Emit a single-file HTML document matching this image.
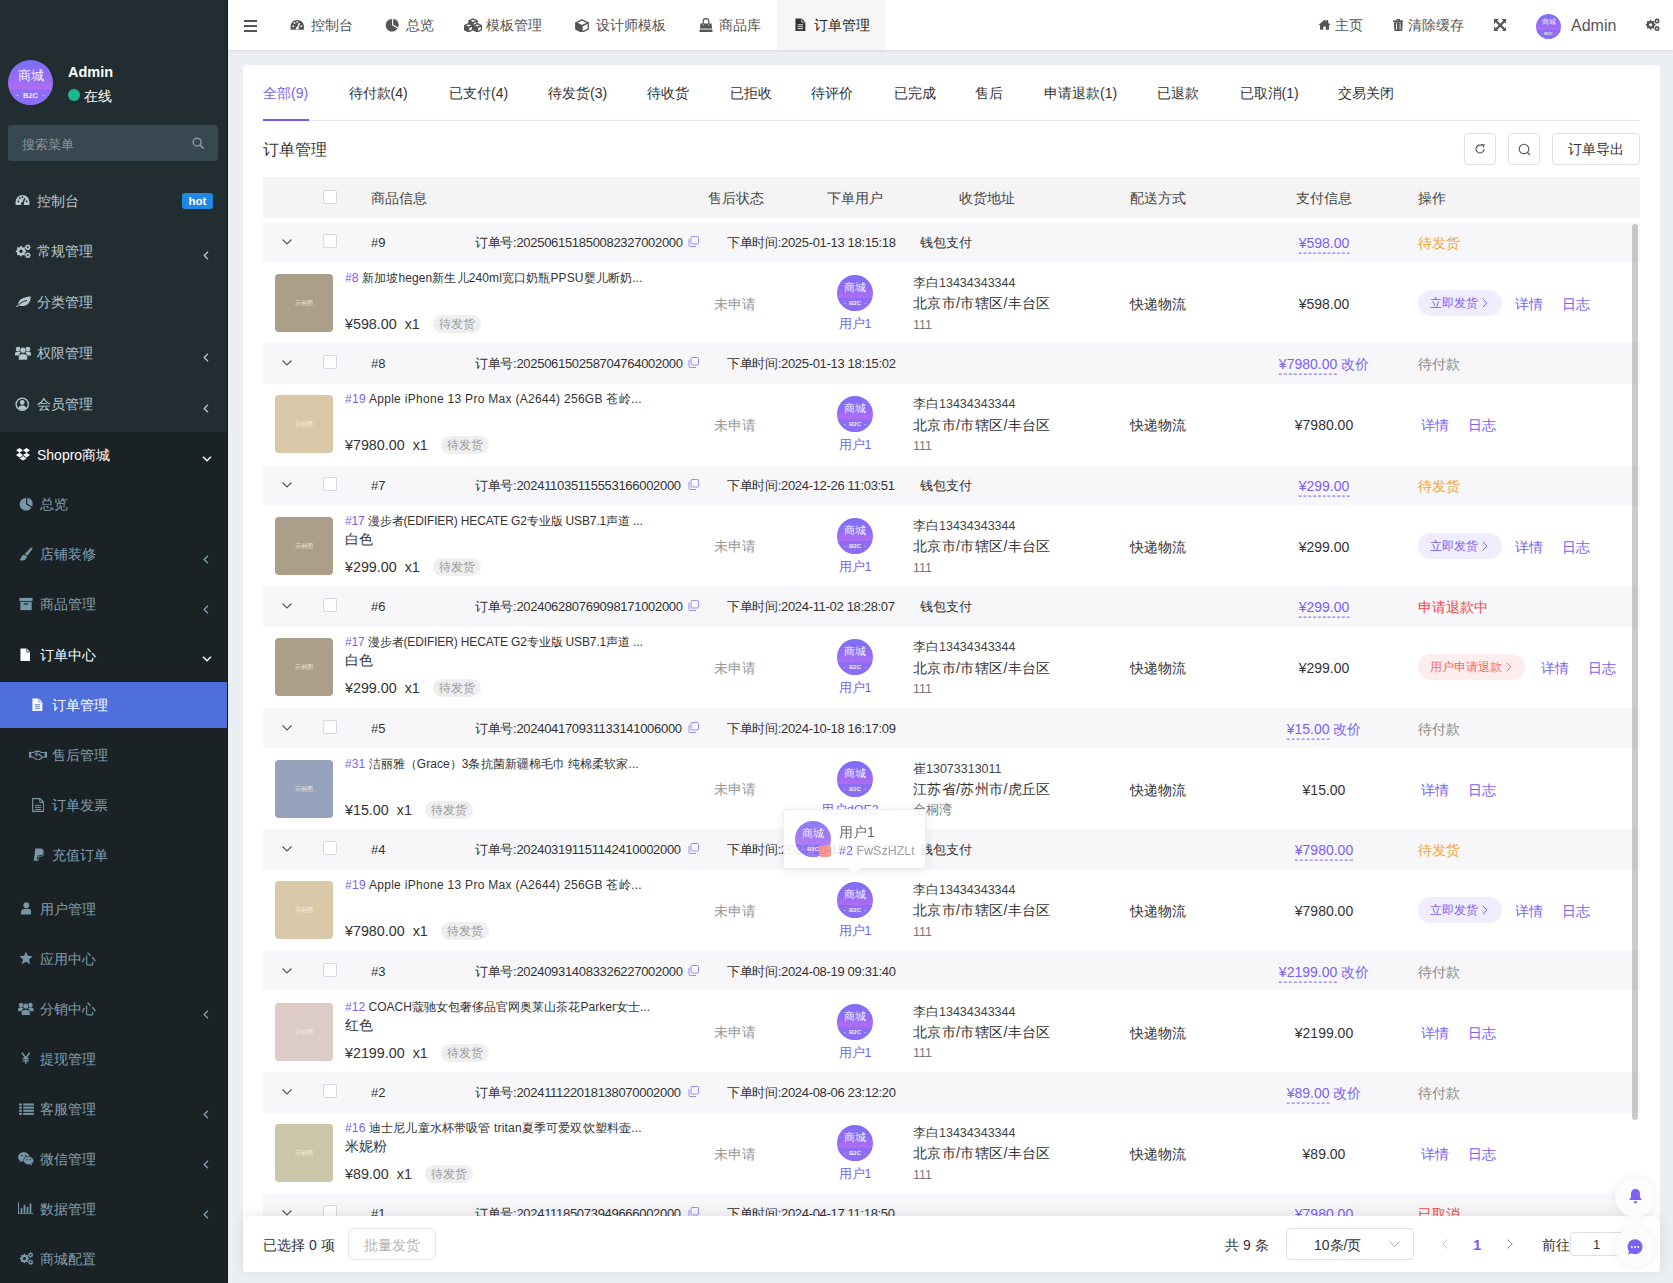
<!DOCTYPE html>
<html><head><meta charset="utf-8"><style>
*{margin:0;padding:0;box-sizing:border-box}
html,body{width:1673px;height:1283px;overflow:hidden}
body{font-family:"Liberation Sans",sans-serif;background:#ebeef3;position:relative;color:#333}
.t{position:absolute;white-space:nowrap;transform:translateY(calc(-50% + 1px));line-height:1.2}
/* sidebar */
.side{position:absolute;left:0;top:0;width:228px;height:1283px;background:#1a2226;overflow:hidden}
.side .topbg{position:absolute;left:0;top:0;width:228px;height:432px;background:#222d32}
.side .edge{position:absolute;right:0;top:0;width:1px;height:1283px;background:#151b1e}
.mi{position:absolute;left:37px;font-size:14px;color:#b8c7ce;transform:translateY(calc(-50% + 1px));white-space:nowrap}
.mi2{position:absolute;left:40px;font-size:14px;color:#829fad;transform:translateY(calc(-50% + 1px));white-space:nowrap}
.mi3{position:absolute;left:52px;font-size:14px;color:#829fad;transform:translateY(calc(-50% + 1px));white-space:nowrap}
.ico{position:absolute}
.lt{position:absolute;left:202px;width:7px;height:9px}
/* header */
.hdr{position:absolute;left:228px;top:0;width:1445px;height:50px;background:#fff;box-shadow:0 1px 3px rgba(0,0,0,0.09)}
.nv{position:absolute;font-size:14px;color:#555;transform:translateY(calc(-50% + 1px));white-space:nowrap}
/* card */
.card{position:absolute;left:243px;top:65px;width:1417px;height:1207px;background:#fff;border-radius:4px}
.tab{position:absolute;top:93px;font-size:14px;color:#333;transform:translateY(calc(-50% + 1px));white-space:nowrap}
.btn{position:absolute;top:133px;height:32px;border:1px solid #dcdfe6;border-radius:4px;background:#fff}
.thead{position:absolute;left:263px;top:177px;width:1377px;height:41px;background:#f4f4f5}
.th{position:absolute;top:198px;font-size:14px;color:#444;transform:translateY(calc(-50% + 1px));white-space:nowrap}
.tablewrap{position:absolute;left:0;top:0;width:1673px;height:1216px;overflow:hidden}
.band{position:absolute;left:263px;width:1377px;height:40.5px;background:#f7f7f9}
.cb{position:absolute;width:14px;height:14px;border:1px solid #d6d9e3;border-radius:2px;background:#fff}
.bt{font-size:13px;color:#333}
.ono{letter-spacing:-0.3px}
.otm{letter-spacing:-0.32px}
.bprice{font-size:14px;color:#7b5ff2;transform:translate(-50%,calc(-50% + 1px))}
.dash{border-bottom:1px dashed #7b5ff2;padding-bottom:2px}
.bst{font-size:14px}
.thumb{position:absolute;width:58px;height:58px;border-radius:4px}
.thumb span{position:absolute;left:0;right:0;top:25px;text-align:center;font-size:6px;color:rgba(255,255,255,0.75)}
.ptitle{font-size:12px;color:#333}
.psku{font-size:14px;color:#333}
.pprice{font-size:14.3px;color:#333}
.tag{display:inline-block;height:18px;width:48px;border-radius:9px;background:#efefef;color:#999;font-size:12px;line-height:18px;text-align:center}
.gray14{font-size:14px;color:#999}
.av{position:absolute;border-radius:50%;background:linear-gradient(180deg,#7d6ef8 0%,#9a6cf4 45%,#b26cf1 64%,#8a6cf4 100%);overflow:hidden}
.avt{position:absolute;left:0;right:0;text-align:center;color:rgba(255,255,255,0.92);line-height:1.2}
.avb{position:absolute;left:0;right:0;background:#8b6ef5}
.avs{position:absolute;left:0;right:0;text-align:center;color:rgba(255,255,255,0.9);line-height:1.2;font-weight:bold}
.uname{font-size:12.5px;color:#7b5ff2}
.addr1{font-size:12.5px;color:#444}
.addr2{font-size:14px;color:#333;letter-spacing:0.37px}
.addr3{font-size:12.5px;color:#777}
.c14{font-size:14px;color:#333}
.link{font-size:14px;color:#7b5ff2}
.pill{position:absolute;height:26px;border-radius:13px;background:#f0edfe;color:#7b5ff2;font-size:12px;line-height:26px;padding-left:12px;white-space:nowrap}
.pill.red{background:#fdeded;color:#f26b6b}
.arr{font-size:13px}
/* footer */
.foot{position:absolute;left:243px;top:1216px;width:1417px;height:56px;background:#fff;border-radius:8px 8px 4px 4px;box-shadow:0 -2px 14px rgba(0,0,0,0.09)}

</style></head><body>
<div class="side"><div class="topbg"></div>
<div class="av" style="left:8px;top:60px;width:45px;height:45px;"><div class="avt" style="font-size:13.12px;top:7.50px">商城</div><div class="avb" style="top:29.12px;height:17.50px"></div><div class="avs" style="font-size:7.50px;top:31.00px">·&nbsp;&nbsp;B2C&nbsp;&nbsp;·</div></div>
<div class="t" style="left:68px;top:72px;font-size:14.5px;font-weight:bold;color:#fff">Admin</div>
<div style="position:absolute;left:68px;top:89px;width:12px;height:12px;border-radius:50%;background:#1fb58f"></div>
<div class="t" style="left:84px;top:95px;font-size:14px;color:#fff">在线</div>
<div style="position:absolute;left:8px;top:125px;width:210px;height:36px;border-radius:3px;background:#374850"></div>
<div class="t" style="left:22px;top:143.5px;font-size:13px;color:#8b9499">搜索菜单</div>
<svg class="ico" style="left:192px;top:137px;" width="12" height="12" viewBox="0 0 14 14"><circle cx="6" cy="6" r="4.6" fill="none" stroke="#8b9499" stroke-width="1.8"/><path d="M9.4 9.4L13 13" stroke="#8b9499" stroke-width="2" stroke-linecap="round"/></svg>
<svg class="ico" style="left:15px;top:194px;" width="15" height="12.0" viewBox="0 0 16 13"><path d="M8 1A7.5 7.5 0 0 0 0.5 8.5V12H15.5V8.5A7.5 7.5 0 0 0 8 1Z" fill="#b8c7ce"/><circle cx="3.5" cy="8" r="1" fill="#222d32"/><circle cx="5" cy="4.5" r="1" fill="#222d32"/><circle cx="8" cy="3.2" r="1" fill="#222d32"/><circle cx="12.5" cy="8" r="1" fill="#222d32"/><path d="M8 11L10.5 4.5" stroke="#222d32" stroke-width="1.6"/><circle cx="8" cy="10.5" r="1.6" fill="#222d32"/></svg>
<div class="mi" style="top:200.5px">控制台</div>
<div style="position:absolute;left:182px;top:193px;width:31px;height:16px;border-radius:3px;background:#1e88e5;color:#fff;font-size:11.5px;font-weight:bold;text-align:center;line-height:16px">hot</div>
<svg class="ico" style="left:15px;top:243.5px;" width="16" height="14.5" viewBox="0 0 16 14.5"><polygon points="11.60,7.20 9.73,8.74 9.96,11.16 7.54,10.93 6.00,12.80 4.46,10.93 2.04,11.16 2.27,8.74 0.40,7.20 2.27,5.66 2.04,3.24 4.46,3.47 6.00,1.60 7.54,3.47 9.96,3.24 9.73,5.66" fill="#b8c7ce"/><circle cx="6" cy="7.2" r="3.472" fill="#b8c7ce"/><circle cx="6" cy="7.2" r="1.68" fill="#222d32"/><polygon points="16.00,3.30 14.93,4.18 15.06,5.56 13.68,5.43 12.80,6.50 11.92,5.43 10.54,5.56 10.67,4.18 9.60,3.30 10.67,2.42 10.54,1.04 11.92,1.17 12.80,0.10 13.68,1.17 15.06,1.04 14.93,2.42" fill="#b8c7ce"/><circle cx="12.8" cy="3.3" r="1.984" fill="#b8c7ce"/><circle cx="12.8" cy="3.3" r="0.96" fill="#222d32"/><polygon points="16.00,11.30 14.93,12.18 15.06,13.56 13.68,13.43 12.80,14.50 11.92,13.43 10.54,13.56 10.67,12.18 9.60,11.30 10.67,10.42 10.54,9.04 11.92,9.17 12.80,8.10 13.68,9.17 15.06,9.04 14.93,10.42" fill="#b8c7ce"/><circle cx="12.8" cy="11.3" r="1.984" fill="#b8c7ce"/><circle cx="12.8" cy="11.3" r="0.96" fill="#222d32"/></svg>
<div class="mi" style="top:250.6px">常规管理</div>
<svg class="ico" style="left:203px;top:251px;" width="6" height="9" viewBox="0 0 6 9"><path d="M5 0.8L1.2 4.5L5 8.2" fill="none" stroke="#b8c7ce" stroke-width="1.3"/></svg>
<svg class="ico" style="left:16px;top:295.8px;" width="15" height="11.5" viewBox="0 0 15 11.5"><path d="M2.2 9.2C1.8 4.5 5.5 1 14.8 0.5C14.5 7.5 10.5 10.5 5 10C3.8 9.9 2.8 9.6 2.2 9.2Z" fill="#b8c7ce"/><path d="M0.6 11.2C3 7.5 6.5 5.5 11 4.3" fill="none" stroke="#222d32" stroke-width="1"/><path d="M0.4 11.3C1 10.2 1.6 9.6 2.4 9.1" fill="none" stroke="#b8c7ce" stroke-width="1.1"/></svg>
<div class="mi" style="top:302px">分类管理</div>
<svg class="ico" style="left:15px;top:345.5px;" width="16" height="14.0" viewBox="0 0 16 14"><circle cx="3.2" cy="3.2" r="2.4" fill="#b8c7ce"/><circle cx="12.8" cy="3.2" r="2.4" fill="#b8c7ce"/><path d="M0 9.5V7.5C0 6.3 1 5.8 3.2 5.8S5.5 6.2 5.5 6.5L3.6 9.5Z" fill="#b8c7ce"/><path d="M16 9.5V7.5C16 6.3 15 5.8 12.8 5.8S10.5 6.2 10.5 6.5L12.4 9.5Z" fill="#b8c7ce"/><circle cx="8" cy="4.2" r="3" fill="#b8c7ce" stroke="#222d32" stroke-width="0.6"/><path d="M3.5 14V11C3.5 8.8 5 7.8 8 7.8S12.5 8.8 12.5 11V14Z" fill="#b8c7ce" stroke="#222d32" stroke-width="0.6"/></svg>
<div class="mi" style="top:352.5px">权限管理</div>
<svg class="ico" style="left:203px;top:353px;" width="6" height="9" viewBox="0 0 6 9"><path d="M5 0.8L1.2 4.5L5 8.2" fill="none" stroke="#b8c7ce" stroke-width="1.3"/></svg>
<svg class="ico" style="left:15px;top:397px;" width="14.5" height="14.5" viewBox="0 0 16 16"><circle cx="8" cy="8" r="7.5" fill="#b8c7ce"/><circle cx="8" cy="8" r="6" fill="#222d32"/><circle cx="8" cy="6" r="2.6" fill="#b8c7ce"/><path d="M3.5 12.5C4.5 10 6 9.5 8 9.5S11.5 10 12.5 12.5C11 14 9.5 14.2 8 14.2S5 14 3.5 12.5Z" fill="#b8c7ce"/></svg>
<div class="mi" style="top:404px">会员管理</div>
<svg class="ico" style="left:203px;top:404px;" width="6" height="9" viewBox="0 0 6 9"><path d="M5 0.8L1.2 4.5L5 8.2" fill="none" stroke="#b8c7ce" stroke-width="1.3"/></svg>
<svg class="ico" style="left:16px;top:447px;" width="14" height="14" viewBox="0 0 16 16"><path d="M4 1L0 3.8L4 6.5L8 3.8ZM12 1L8 3.8L12 6.5L16 3.8ZM0 9.2L4 12L8 9.2L4 6.5ZM16 9.2L12 12L8 9.2L12 6.5ZM4 13L8 15.5L12 13L8 10.3Z" fill="#fff"/></svg>
<div class="mi" style="top:454.5px;color:#fff">Shopro商城</div>
<svg class="ico" style="left:202px;top:456px;" width="10" height="6" viewBox="0 0 10 6"><path d="M1 0.8L5 4.8L9 0.8" fill="none" stroke="#fff" stroke-width="1.35"/></svg>
<svg class="ico" style="left:19px;top:497px;" width="14" height="14" viewBox="0 0 16 16"><path d="M8 8.3L8.00 1.10A7.2 7.2 0 1 0 14.24 11.90Z" fill="#7796a6"/><path d="M8.9 7.800000000000001L8.90 0.60A7.2 7.2 0 0 1 15.14 11.40Z" fill="#7796a6" stroke="#1a2226" stroke-width="0.9"/></svg>
<div class="mi2" style="top:504px">总览</div>
<svg class="ico" style="left:19px;top:547px;" width="14" height="14" viewBox="0 0 16 16"><path d="M15.2 0.8C15.8 1.3 15.5 2.2 14.8 3.2L9.5 10L6.5 8L13 1.5C13.9 0.7 14.7 0.4 15.2 0.8Z" fill="#7796a6"/><path d="M6 8.8L9 10.8C8.8 13.5 6.5 15.5 3.5 15.5C2 15.5 0.8 14.8 0.5 14C2.2 13.8 2.5 12.8 2.8 11.5C3.2 9.8 4.5 8.8 6 8.8Z" fill="#7796a6"/></svg>
<div class="mi2" style="top:554px">店铺装修</div>
<svg class="ico" style="left:203px;top:555px;" width="6" height="9" viewBox="0 0 6 9"><path d="M5 0.8L1.2 4.5L5 8.2" fill="none" stroke="#829fad" stroke-width="1.3"/></svg>
<svg class="ico" style="left:19px;top:597px;" width="14" height="14" viewBox="0 0 16 16"><rect x="0.5" y="1" width="15" height="3.5" fill="#7796a6"/><rect x="1.5" y="5.5" width="13" height="9.5" fill="#7796a6"/><rect x="5.5" y="7" width="5" height="1.6" rx="0.5" fill="#1a2226"/></svg>
<div class="mi2" style="top:604px">商品管理</div>
<svg class="ico" style="left:203px;top:605px;" width="6" height="9" viewBox="0 0 6 9"><path d="M5 0.8L1.2 4.5L5 8.2" fill="none" stroke="#829fad" stroke-width="1.3"/></svg>
<svg class="ico" style="left:19.5px;top:648px;" width="10.8" height="13.5" viewBox="0 0 12 15"><path d="M0.5 0.5H7.5L11.5 4.5V14.5H0.5Z" fill="#fff"/><path d="M7.5 0.5V4.5H11.5" fill="none" stroke="#1a2226" stroke-width="0.8"/></svg>
<div class="mi2" style="top:655px;color:#fff">订单中心</div>
<svg class="ico" style="left:202px;top:656px;" width="10" height="6" viewBox="0 0 10 6"><path d="M1 0.8L5 4.8L9 0.8" fill="none" stroke="#fff" stroke-width="1.35"/></svg>
<div style="position:absolute;left:0;top:682px;width:228px;height:46px;background:#4f6fdc"></div>
<svg class="ico" style="left:32px;top:698px;" width="10.8" height="13.5" viewBox="0 0 12 15"><path d="M0.5 0.5H7.5L11.5 4.5V14.5H0.5Z" fill="#fff"/><path d="M7.5 0.5V4.5H11.5" fill="none" stroke="#4f6fdc" stroke-width="0.8"/><rect x="3" y="7" width="6" height="1" fill="#4f6fdc"/><rect x="3" y="9.2" width="6" height="1" fill="#4f6fdc"/><rect x="3" y="11.4" width="6" height="1" fill="#4f6fdc"/></svg>
<div class="mi3" style="top:705px;color:#fff">订单管理</div>
<svg class="ico" style="left:29px;top:749.5px;" width="18" height="10.799999999999999" viewBox="0 0 20 12"><rect x="0" y="2" width="2.6" height="6.5" fill="#7796a6"/><rect x="17.4" y="2" width="2.6" height="6.5" fill="#7796a6"/><path d="M2.6 2.8H5L7.5 1.5H11.5L13.5 2.8H17.4M2.6 7.8H4.5L9 11C9.8 11.5 10.8 11.3 11.5 10.6L15.5 7.8H17.4" fill="none" stroke="#7796a6" stroke-width="1.3"/><path d="M9.5 2L7 4.8C7.8 6 9.5 6 11 4.5L14.5 7.5" fill="none" stroke="#7796a6" stroke-width="1.3"/></svg>
<div class="mi3" style="top:754.7px">售后管理</div>
<svg class="ico" style="left:32px;top:798px;" width="12.32" height="14" viewBox="0 0 12.3 14"><path d="M0.7 0.7H8L11.6 4.3V13.3H0.7Z" fill="none" stroke="#7796a6" stroke-width="1.2"/><path d="M7.8 0.9V4.5H11.4" fill="none" stroke="#7796a6" stroke-width="1"/><rect x="3" y="6.8" width="6.3" height="1" fill="#7796a6"/><rect x="3" y="8.9" width="6.3" height="1" fill="#7796a6"/><rect x="3" y="11" width="6.3" height="1" fill="#7796a6"/></svg>
<div class="mi3" style="top:805px">订单发票</div>
<svg class="ico" style="left:32px;top:848px;" width="13.5" height="13.5" viewBox="0 0 14 16"><path d="M3 0.5H9C12 0.5 13.2 2.2 12.7 4.8C12.2 7.5 10.2 9 7.5 9H5.5L4.5 15H1Z" fill="#7796a6"/><path d="M13.5 5C14 7.5 12.5 10.5 9 10.5H7.2L6.4 15.5H3.7L4 14H5.5L6.3 9.5H8C10.5 9.5 12.5 8 13.2 5.2Z" fill="#7796a6" opacity="0.8"/></svg>
<div class="mi3" style="top:854.5px">充值订单</div>
<svg class="ico" style="left:20.5px;top:902px;" width="10.625" height="12.5" viewBox="0 0 11 13"><circle cx="5.5" cy="3.3" r="3" fill="#7796a6"/><path d="M0 13V10.5C0 8 2 7 5.5 7S11 8 11 10.5V13Z" fill="#7796a6"/></svg>
<div class="mi2" style="top:909px">用户管理</div>
<svg class="ico" style="left:19px;top:951px;" width="14" height="14" viewBox="0 0 16 16"><path d="M8 0.5L10.2 5.5L15.5 6L11.5 9.6L12.7 15L8 12.2L3.3 15L4.5 9.6L0.5 6L5.8 5.5Z" fill="#7796a6"/></svg>
<div class="mi2" style="top:959px">应用中心</div>
<svg class="ico" style="left:18px;top:1001.5px;" width="15.5" height="13.5625" viewBox="0 0 16 14"><circle cx="3.2" cy="3.2" r="2.4" fill="#7796a6"/><circle cx="12.8" cy="3.2" r="2.4" fill="#7796a6"/><path d="M0 9.5V7.5C0 6.3 1 5.8 3.2 5.8S5.5 6.2 5.5 6.5L3.6 9.5Z" fill="#7796a6"/><path d="M16 9.5V7.5C16 6.3 15 5.8 12.8 5.8S10.5 6.2 10.5 6.5L12.4 9.5Z" fill="#7796a6"/><circle cx="8" cy="4.2" r="3" fill="#7796a6" stroke="#1a2226" stroke-width="0.6"/><path d="M3.5 14V11C3.5 8.8 5 7.8 8 7.8S12.5 8.8 12.5 11V14Z" fill="#7796a6" stroke="#1a2226" stroke-width="0.6"/></svg>
<div class="mi2" style="top:1009px">分销中心</div>
<svg class="ico" style="left:203px;top:1010px;" width="6" height="9" viewBox="0 0 6 9"><path d="M5 0.8L1.2 4.5L5 8.2" fill="none" stroke="#829fad" stroke-width="1.3"/></svg>
<svg class="ico" style="left:21px;top:1052px;" width="9.600000000000001" height="12" viewBox="0 0 10 12"><path d="M1 0.5L5 6L9 0.5M5 6V12M1.8 6.5H8.2M1.8 9H8.2" fill="none" stroke="#7796a6" stroke-width="1.5"/></svg>
<div class="mi2" style="top:1059px">提现管理</div>
<svg class="ico" style="left:19px;top:1103px;" width="15" height="12.0" viewBox="0 0 16 13"><rect x="0" y="0.5" width="3" height="2.2" fill="#7796a6"/><rect x="4.5" y="0.5" width="11.5" height="2.2" fill="#7796a6"/><rect x="0" y="3.9" width="3" height="2.2" fill="#7796a6"/><rect x="4.5" y="3.9" width="11.5" height="2.2" fill="#7796a6"/><rect x="0" y="7.3" width="3" height="2.2" fill="#7796a6"/><rect x="4.5" y="7.3" width="11.5" height="2.2" fill="#7796a6"/><rect x="0" y="10.7" width="3" height="2.2" fill="#7796a6"/><rect x="4.5" y="10.7" width="11.5" height="2.2" fill="#7796a6"/></svg>
<div class="mi2" style="top:1109px">客服管理</div>
<svg class="ico" style="left:203px;top:1110px;" width="6" height="9" viewBox="0 0 6 9"><path d="M5 0.8L1.2 4.5L5 8.2" fill="none" stroke="#829fad" stroke-width="1.3"/></svg>
<svg class="ico" style="left:18px;top:1152px;" width="16" height="13.6" viewBox="0 0 18 15"><ellipse cx="6.5" cy="5.5" rx="6.5" ry="5.3" fill="#7796a6"/><path d="M2 9L1.5 11.5L4.5 10Z" fill="#7796a6"/><ellipse cx="12" cy="9.5" rx="5.8" ry="4.6" fill="#7796a6" stroke="#1a2226" stroke-width="0.8"/><path d="M15 13L16 15L13 13.8Z" fill="#7796a6"/><circle cx="4.5" cy="4" r="0.9" fill="#1a2226"/><circle cx="8.5" cy="4" r="0.9" fill="#1a2226"/><circle cx="10.3" cy="8.5" r="0.7" fill="#1a2226"/><circle cx="13.8" cy="8.5" r="0.7" fill="#1a2226"/></svg>
<div class="mi2" style="top:1159px">微信管理</div>
<svg class="ico" style="left:203px;top:1160px;" width="6" height="9" viewBox="0 0 6 9"><path d="M5 0.8L1.2 4.5L5 8.2" fill="none" stroke="#829fad" stroke-width="1.3"/></svg>
<svg class="ico" style="left:18px;top:1202px;" width="15.5" height="12.4" viewBox="0 0 18 14"><path d="M0.6 0V13.4H18" fill="none" stroke="#7796a6" stroke-width="1.2"/><rect x="3" y="7" width="2" height="5.5" fill="#7796a6"/><rect x="6.5" y="3" width="2" height="9.5" fill="#7796a6"/><rect x="10" y="5.5" width="2" height="7" fill="#7796a6"/><rect x="13.5" y="1.5" width="2" height="11" fill="#7796a6"/></svg>
<div class="mi2" style="top:1209px">数据管理</div>
<svg class="ico" style="left:203px;top:1210px;" width="6" height="9" viewBox="0 0 6 9"><path d="M5 0.8L1.2 4.5L5 8.2" fill="none" stroke="#829fad" stroke-width="1.3"/></svg>
<svg class="ico" style="left:19px;top:1252px;" width="14.5" height="13.140625" viewBox="0 0 16 14.5"><polygon points="11.60,7.20 9.73,8.74 9.96,11.16 7.54,10.93 6.00,12.80 4.46,10.93 2.04,11.16 2.27,8.74 0.40,7.20 2.27,5.66 2.04,3.24 4.46,3.47 6.00,1.60 7.54,3.47 9.96,3.24 9.73,5.66" fill="#7796a6"/><circle cx="6" cy="7.2" r="3.472" fill="#7796a6"/><circle cx="6" cy="7.2" r="1.68" fill="#1a2226"/><polygon points="16.00,3.30 14.93,4.18 15.06,5.56 13.68,5.43 12.80,6.50 11.92,5.43 10.54,5.56 10.67,4.18 9.60,3.30 10.67,2.42 10.54,1.04 11.92,1.17 12.80,0.10 13.68,1.17 15.06,1.04 14.93,2.42" fill="#7796a6"/><circle cx="12.8" cy="3.3" r="1.984" fill="#7796a6"/><circle cx="12.8" cy="3.3" r="0.96" fill="#1a2226"/><polygon points="16.00,11.30 14.93,12.18 15.06,13.56 13.68,13.43 12.80,14.50 11.92,13.43 10.54,13.56 10.67,12.18 9.60,11.30 10.67,10.42 10.54,9.04 11.92,9.17 12.80,8.10 13.68,9.17 15.06,9.04 14.93,10.42" fill="#7796a6"/><circle cx="12.8" cy="11.3" r="1.984" fill="#7796a6"/><circle cx="12.8" cy="11.3" r="0.96" fill="#1a2226"/></svg>
<div class="mi2" style="top:1259px">商城配置</div>
<div class="edge"></div></div>
<div class="hdr"></div>
<div style="position:absolute;left:244px;top:19.5px;width:13px;height:2px;background:#555"></div>
<div style="position:absolute;left:244px;top:24.5px;width:13px;height:2px;background:#555"></div>
<div style="position:absolute;left:244px;top:29.5px;width:13px;height:2px;background:#555"></div>
<svg class="ico" style="left:290px;top:19px;" width="14.5" height="11.600000000000001" viewBox="0 0 16 13"><path d="M8 1A7.5 7.5 0 0 0 0.5 8.5V12H15.5V8.5A7.5 7.5 0 0 0 8 1Z" fill="#555"/><circle cx="3.5" cy="8" r="1" fill="#fff"/><circle cx="5" cy="4.5" r="1" fill="#fff"/><circle cx="8" cy="3.2" r="1" fill="#fff"/><circle cx="12.5" cy="8" r="1" fill="#fff"/><path d="M8 11L10.5 4.5" stroke="#fff" stroke-width="1.6"/><circle cx="8" cy="10.5" r="1.6" fill="#fff"/></svg>
<div class="nv" style="left:310.5px;top:25px">控制台</div>
<svg class="ico" style="left:385px;top:18px;" width="14" height="14" viewBox="0 0 16 16"><path d="M8 8.3L8.00 1.10A7.2 7.2 0 1 0 14.24 11.90Z" fill="#555"/><path d="M8.9 7.800000000000001L8.90 0.60A7.2 7.2 0 0 1 15.14 11.40Z" fill="#555" stroke="#fff" stroke-width="0.9"/></svg>
<div class="nv" style="left:405.5px;top:25px">总览</div>
<svg class="ico" style="left:464px;top:18px;" width="18" height="14.0" viewBox="0 0 18 14"><polygon points="9,0.8 13.0,2.8 9,4.8 5.0,2.8" fill="#fff" stroke="#555" stroke-width="1.3" stroke-linejoin="round"/><polygon points="5.0,2.8 9,4.8 9,9.0 5.0,7.0" fill="#555" stroke="#555" stroke-width="1.3" stroke-linejoin="round"/><polygon points="13.0,2.8 9,4.8 9,9.0 13.0,7.0" fill="#fff" stroke="#555" stroke-width="1.3" stroke-linejoin="round"/><polygon points="4.6,5.6 8.6,7.6 4.6,9.6 0.5999999999999996,7.6" fill="#fff" stroke="#555" stroke-width="1.3" stroke-linejoin="round"/><polygon points="0.5999999999999996,7.6 4.6,9.6 4.6,13.8 0.5999999999999996,11.8" fill="#555" stroke="#555" stroke-width="1.3" stroke-linejoin="round"/><polygon points="8.6,7.6 4.6,9.6 4.6,13.8 8.6,11.8" fill="#fff" stroke="#555" stroke-width="1.3" stroke-linejoin="round"/><polygon points="13.4,5.6 17.4,7.6 13.4,9.6 9.4,7.6" fill="#fff" stroke="#555" stroke-width="1.3" stroke-linejoin="round"/><polygon points="9.4,7.6 13.4,9.6 13.4,13.8 9.4,11.8" fill="#555" stroke="#555" stroke-width="1.3" stroke-linejoin="round"/><polygon points="17.4,7.6 13.4,9.6 13.4,13.8 17.4,11.8" fill="#fff" stroke="#555" stroke-width="1.3" stroke-linejoin="round"/></svg>
<div class="nv" style="left:486px;top:25px">模板管理</div>
<svg class="ico" style="left:575px;top:18.5px;" width="14" height="13.5" viewBox="0 0 14 13.5"><polygon points="7,0.8 13.2,3.8 7,6.8 0.7999999999999998,3.8" fill="#fff" stroke="#555" stroke-width="1.3" stroke-linejoin="round"/><polygon points="0.7999999999999998,3.8 7,6.8 7,13.2 0.7999999999999998,10.2" fill="#555" stroke="#555" stroke-width="1.3" stroke-linejoin="round"/><polygon points="13.2,3.8 7,6.8 7,13.2 13.2,10.2" fill="#fff" stroke="#555" stroke-width="1.3" stroke-linejoin="round"/></svg>
<div class="nv" style="left:595.5px;top:25px">设计师模板</div>
<svg class="ico" style="left:699px;top:18px;" width="14" height="14" viewBox="0 0 14 14"><path d="M4.2 6V3.2A2.8 2.6 0 0 1 9.8 3.2V6" fill="none" stroke="#555" stroke-width="1.2"/><path d="M1.5 5.5H12.5L13.6 14H0.4Z" fill="#555"/><rect x="0.6" y="10.6" width="12.8" height="0.9" fill="#fff"/><circle cx="4.2" cy="6.8" r="0.6" fill="#fff"/><circle cx="9.8" cy="6.8" r="0.6" fill="#fff"/></svg>
<div class="nv" style="left:719px;top:25px">商品库</div>
<div style="position:absolute;left:777px;top:0;width:108px;height:50px;background:#f6f6f6"></div>
<svg class="ico" style="left:795px;top:18px;" width="10.8" height="13.5" viewBox="0 0 12 15"><path d="M0.5 0.5H7.5L11.5 4.5V14.5H0.5Z" fill="#333"/><path d="M7.5 0.5V4.5H11.5" fill="none" stroke="#f6f6f6" stroke-width="0.8"/><rect x="3" y="7" width="6" height="1" fill="#f6f6f6"/><rect x="3" y="9.2" width="6" height="1" fill="#f6f6f6"/><rect x="3" y="11.4" width="6" height="1" fill="#f6f6f6"/></svg>
<div class="nv" style="left:813.5px;top:25px;color:#222">订单管理</div>
<svg class="ico" style="left:1317.5px;top:19px;" width="13" height="11.049999999999999" viewBox="0 0 16 13"><path d="M8 0.5L0.5 7H2.5V13H6.5V9H9.5V13H13.5V7H15.5L12.5 4.3V1H10.5V2.5Z" fill="#555"/></svg>
<div class="nv" style="left:1334.5px;top:25px">主页</div>
<svg class="ico" style="left:1392.5px;top:18.5px;" width="10.625" height="12.5" viewBox="0 0 12 14"><rect x="0" y="1.5" width="12" height="1.8" fill="#555"/><rect x="4" y="0" width="4" height="2" fill="#555"/><path d="M1 3.5H11L10.3 14H1.7Z" fill="#555"/><rect x="3.5" y="5" width="1" height="7" fill="#fff"/><rect x="7.5" y="5" width="1" height="7" fill="#fff"/></svg>
<div class="nv" style="left:1408px;top:25px">清除缓存</div>
<svg class="ico" style="left:1493.5px;top:18.5px;" width="12.5" height="12.5" viewBox="0 0 14 14"><path d="M2.5 2.5L11.5 11.5M11.5 2.5L2.5 11.5" stroke="#555" stroke-width="2.6"/><path d="M0 0H5.5L0 5.5Z M14 0V5.5L8.5 0Z M0 14V8.5L5.5 14Z M14 14H8.5L14 8.5Z" fill="#555"/></svg>
<div class="av" style="left:1536px;top:14px;width:25px;height:25px;"><div class="avt" style="font-size:7.29px;top:4.17px">商城</div><div class="avb" style="top:16.18px;height:9.72px"></div><div class="avs" style="font-size:4.17px;top:17.22px">·&nbsp;&nbsp;B2C&nbsp;&nbsp;·</div></div>
<div class="nv" style="left:1571px;top:25px;font-size:16px">Admin</div>
<svg class="ico" style="left:1645px;top:17.5px;" width="15" height="13.59375" viewBox="0 0 16 14.5"><polygon points="11.60,7.20 9.73,8.74 9.96,11.16 7.54,10.93 6.00,12.80 4.46,10.93 2.04,11.16 2.27,8.74 0.40,7.20 2.27,5.66 2.04,3.24 4.46,3.47 6.00,1.60 7.54,3.47 9.96,3.24 9.73,5.66" fill="#555"/><circle cx="6" cy="7.2" r="3.472" fill="#555"/><circle cx="6" cy="7.2" r="1.68" fill="#fff"/><polygon points="16.00,3.30 14.93,4.18 15.06,5.56 13.68,5.43 12.80,6.50 11.92,5.43 10.54,5.56 10.67,4.18 9.60,3.30 10.67,2.42 10.54,1.04 11.92,1.17 12.80,0.10 13.68,1.17 15.06,1.04 14.93,2.42" fill="#555"/><circle cx="12.8" cy="3.3" r="1.984" fill="#555"/><circle cx="12.8" cy="3.3" r="0.96" fill="#fff"/><polygon points="16.00,11.30 14.93,12.18 15.06,13.56 13.68,13.43 12.80,14.50 11.92,13.43 10.54,13.56 10.67,12.18 9.60,11.30 10.67,10.42 10.54,9.04 11.92,9.17 12.80,8.10 13.68,9.17 15.06,9.04 14.93,10.42" fill="#555"/><circle cx="12.8" cy="11.3" r="1.984" fill="#555"/><circle cx="12.8" cy="11.3" r="0.96" fill="#fff"/></svg>
<div class="card"></div>
<div class="tab" style="left:263px;color:#7b5ff2">全部(9)</div>
<div class="tab" style="left:348.5px;color:#333">待付款(4)</div>
<div class="tab" style="left:449px;color:#333">已支付(4)</div>
<div class="tab" style="left:548px;color:#333">待发货(3)</div>
<div class="tab" style="left:647px;color:#333">待收货</div>
<div class="tab" style="left:730px;color:#333">已拒收</div>
<div class="tab" style="left:811px;color:#333">待评价</div>
<div class="tab" style="left:894px;color:#333">已完成</div>
<div class="tab" style="left:975px;color:#333">售后</div>
<div class="tab" style="left:1044px;color:#333">申请退款(1)</div>
<div class="tab" style="left:1157px;color:#333">已退款</div>
<div class="tab" style="left:1239.5px;color:#333">已取消(1)</div>
<div class="tab" style="left:1338px;color:#333">交易关闭</div>
<div style="position:absolute;left:263px;top:119.5px;width:1377px;height:1px;background:#e4e7ed"></div>
<div style="position:absolute;left:263px;top:119px;width:46px;height:2px;background:#7058f0"></div>
<div class="t" style="left:263px;top:149px;font-size:16px;color:#333">订单管理</div>
<div class="btn" style="left:1464px;width:32px"></div>
<svg class="ico" style="left:1474px;top:143px" width="12" height="12" viewBox="0 0 12 12"><path d="M10 6A4 4 0 1 1 8.5 2.9" fill="none" stroke="#555" stroke-width="1.1"/><path d="M7.2 1.5L10 1.8L9.4 4.6" fill="none" stroke="#555" stroke-width="1.1"/></svg>
<div class="btn" style="left:1508px;width:32px"></div>
<svg class="ico" style="left:1517.5px;top:142.5px" width="13" height="13" viewBox="0 0 13 13"><circle cx="6" cy="6" r="4.8" fill="none" stroke="#555" stroke-width="1.1"/><path d="M9.5 9.5L12 12" stroke="#555" stroke-width="1.1"/></svg>
<div class="btn" style="left:1552px;width:88px"></div>
<div class="t" style="left:1568px;top:149px;font-size:13.5px;color:#333">订单导出</div>
<div class="thead"></div>
<div class="cb" style="left:323px;top:190px"></div>
<div class="th" style="left:371px">商品信息</div>
<div class="th" style="left:707.5px">售后状态</div>
<div class="th" style="left:826.5px">下单用户</div>
<div class="th" style="left:959px">收货地址</div>
<div class="th" style="left:1130px">配送方式</div>
<div class="th" style="left:1296px">支付信息</div>
<div class="th" style="left:1418px">操作</div>
<div class="tablewrap">
<div class="band" style="top:222.00px"></div>
<svg style="position:absolute;left:282px;top:239.0px" width="10" height="6" viewBox="0 0 10 6"><path d="M0.5 0.5L5 5L9.5 0.5" fill="none" stroke="#555" stroke-width="1.1"/></svg>
<div class="cb" style="left:323px;top:234.0px"></div>
<div class="t bt" style="left:371px;top:242.0px;">#9</div>
<div class="t bt ono" style="left:475px;top:242.0px;">订单号:202506151850082327002000</div>
<svg style="position:absolute;left:688px;top:236.0px" width="11" height="11" viewBox="0 0 11 11"><rect x="3" y="0.5" width="7.5" height="7.5" rx="1" fill="none" stroke="#9a8cf0" stroke-width="1"/><path d="M1 3v6.5a1 1 0 0 0 1 1H8" fill="none" stroke="#9a8cf0" stroke-width="1"/></svg>
<div class="t bt otm" style="left:727px;top:242.0px;">下单时间:2025-01-13 18:15:18</div>
<div class="t bt" style="left:920px;top:242.0px;font-size:12.5px">钱包支付</div>
<div class="t bprice" style="left:1324px;top:242.0px;transform:translate(-50%,calc(-50% + 1px))"><span class="dash">¥598.00</span></div>
<div class="t bst" style="left:1418px;top:242.0px;color:#f2a53c">待发货</div>
<div class="thumb" style="left:275px;top:274.00px;background:#ab9f8a"><span>示例图</span></div>
<div class="t ptitle" style="left:345px;top:277.0px;letter-spacing:0.12px"><span style="color:#7b5ff2">#8</span> 新加坡hegen新生儿240ml宽口奶瓶PPSU婴儿断奶...</div>
<div class="t pprice" style="left:345px;top:323.0px;">¥598.00<span style="margin-left:8px">x1</span><span class="tag" style="margin-left:13px;vertical-align:1px">待发货</span></div>
<div class="t gray14" style="left:714px;top:302.5px;">未申请</div>
<div class="av" style="left:837px;top:275px;width:36px;height:36px">
<div class="avt" style="font-size:10.50px;top:6.00px">商城</div>
<div class="avb" style="top:23.30px;height:14.00px"></div>
<div class="avs" style="font-size:6.00px;top:24.80px">·&nbsp;&nbsp;B2C&nbsp;&nbsp;·</div></div>
<div class="t uname" style="left:855px;top:323.00px;transform:translate(-50%,calc(-50% + 1px))">用户1</div>
<div class="t addr1" style="left:913px;top:282.0px;">李白13434343344</div>
<div class="t addr2" style="left:913px;top:302.3px;">北京市/市辖区/丰台区</div>
<div class="t addr3" style="left:913px;top:323.7px;">111</div>
<div class="t c14" style="left:1130px;top:303.0px;">快递物流</div>
<div class="t c14" style="left:1324px;top:303.00px;transform:translate(-50%,calc(-50% + 1px))">¥598.00</div>
<div class="pill" style="left:1418px;top:290.00px;width:84px">立即发货<svg style="position:absolute;left:64px;top:8px" width="6" height="10" viewBox="0 0 6 10"><path d="M0.8 0.8L4.8 5L0.8 9.2" fill="none" stroke="#7b5ff2" stroke-width="1"/></svg></div>
<div class="t link" style="left:1515px;top:303.0px;">详情</div>
<div class="t link" style="left:1562px;top:303.0px;">日志</div>
<div class="band" style="top:343.43px"></div>
<svg style="position:absolute;left:282px;top:360.43px" width="10" height="6" viewBox="0 0 10 6"><path d="M0.5 0.5L5 5L9.5 0.5" fill="none" stroke="#555" stroke-width="1.1"/></svg>
<div class="cb" style="left:323px;top:355.43px"></div>
<div class="t bt" style="left:371px;top:363.43px;">#8</div>
<div class="t bt ono" style="left:475px;top:363.43px;">订单号:202506150258704764002000</div>
<svg style="position:absolute;left:688px;top:357.43px" width="11" height="11" viewBox="0 0 11 11"><rect x="3" y="0.5" width="7.5" height="7.5" rx="1" fill="none" stroke="#9a8cf0" stroke-width="1"/><path d="M1 3v6.5a1 1 0 0 0 1 1H8" fill="none" stroke="#9a8cf0" stroke-width="1"/></svg>
<div class="t bt otm" style="left:727px;top:363.43px;">下单时间:2025-01-13 18:15:02</div>
<div class="t bprice" style="left:1324px;top:363.43px;transform:translate(-50%,calc(-50% + 1px))"><span class="dash">¥7980.00</span> 改价</div>
<div class="t bst" style="left:1418px;top:363.43px;color:#888">待付款</div>
<div class="thumb" style="left:275px;top:395.43px;background:#d9c9a9"><span>示例图</span></div>
<div class="t ptitle" style="left:345px;top:398.43px;letter-spacing:0.3px"><span style="color:#7b5ff2">#19</span> Apple iPhone 13 Pro Max (A2644) 256GB 苍岭...</div>
<div class="t pprice" style="left:345px;top:444.43px;">¥7980.00<span style="margin-left:8px">x1</span><span class="tag" style="margin-left:13px;vertical-align:1px">待发货</span></div>
<div class="t gray14" style="left:714px;top:423.93px;">未申请</div>
<div class="av" style="left:837px;top:396px;width:36px;height:36px">
<div class="avt" style="font-size:10.50px;top:6.00px">商城</div>
<div class="avb" style="top:23.30px;height:14.00px"></div>
<div class="avs" style="font-size:6.00px;top:24.80px">·&nbsp;&nbsp;B2C&nbsp;&nbsp;·</div></div>
<div class="t uname" style="left:855px;top:444.43px;transform:translate(-50%,calc(-50% + 1px))">用户1</div>
<div class="t addr1" style="left:913px;top:403.43px;">李白13434343344</div>
<div class="t addr2" style="left:913px;top:423.73px;">北京市/市辖区/丰台区</div>
<div class="t addr3" style="left:913px;top:445.13px;">111</div>
<div class="t c14" style="left:1130px;top:424.43px;">快递物流</div>
<div class="t c14" style="left:1324px;top:424.43px;transform:translate(-50%,calc(-50% + 1px))">¥7980.00</div>
<div class="t link" style="left:1421px;top:424.43px;">详情</div>
<div class="t link" style="left:1468px;top:424.43px;">日志</div>
<div class="band" style="top:464.86px"></div>
<svg style="position:absolute;left:282px;top:481.86px" width="10" height="6" viewBox="0 0 10 6"><path d="M0.5 0.5L5 5L9.5 0.5" fill="none" stroke="#555" stroke-width="1.1"/></svg>
<div class="cb" style="left:323px;top:476.86px"></div>
<div class="t bt" style="left:371px;top:484.86px;">#7</div>
<div class="t bt ono" style="left:475px;top:484.86px;">订单号:202411035115553166002000</div>
<svg style="position:absolute;left:688px;top:478.86px" width="11" height="11" viewBox="0 0 11 11"><rect x="3" y="0.5" width="7.5" height="7.5" rx="1" fill="none" stroke="#9a8cf0" stroke-width="1"/><path d="M1 3v6.5a1 1 0 0 0 1 1H8" fill="none" stroke="#9a8cf0" stroke-width="1"/></svg>
<div class="t bt otm" style="left:727px;top:484.86px;">下单时间:2024-12-26 11:03:51</div>
<div class="t bt" style="left:920px;top:484.86px;font-size:12.5px">钱包支付</div>
<div class="t bprice" style="left:1324px;top:484.86px;transform:translate(-50%,calc(-50% + 1px))"><span class="dash">¥299.00</span></div>
<div class="t bst" style="left:1418px;top:484.86px;color:#f2a53c">待发货</div>
<div class="thumb" style="left:275px;top:516.86px;background:#ab9f8a"><span>示例图</span></div>
<div class="t ptitle" style="left:345px;top:519.86px;letter-spacing:-0.13px"><span style="color:#7b5ff2">#17</span> 漫步者(EDIFIER) HECATE G2专业版 USB7.1声道 ...</div>
<div class="t psku" style="left:345px;top:537.86px;">白色</div>
<div class="t pprice" style="left:345px;top:565.86px;">¥299.00<span style="margin-left:8px">x1</span><span class="tag" style="margin-left:13px;vertical-align:1px">待发货</span></div>
<div class="t gray14" style="left:714px;top:545.36px;">未申请</div>
<div class="av" style="left:837px;top:518px;width:36px;height:36px">
<div class="avt" style="font-size:10.50px;top:6.00px">商城</div>
<div class="avb" style="top:23.30px;height:14.00px"></div>
<div class="avs" style="font-size:6.00px;top:24.80px">·&nbsp;&nbsp;B2C&nbsp;&nbsp;·</div></div>
<div class="t uname" style="left:855px;top:565.86px;transform:translate(-50%,calc(-50% + 1px))">用户1</div>
<div class="t addr1" style="left:913px;top:524.86px;">李白13434343344</div>
<div class="t addr2" style="left:913px;top:545.16px;">北京市/市辖区/丰台区</div>
<div class="t addr3" style="left:913px;top:566.5600000000001px;">111</div>
<div class="t c14" style="left:1130px;top:545.86px;">快递物流</div>
<div class="t c14" style="left:1324px;top:545.86px;transform:translate(-50%,calc(-50% + 1px))">¥299.00</div>
<div class="pill" style="left:1418px;top:532.86px;width:84px">立即发货<svg style="position:absolute;left:64px;top:8px" width="6" height="10" viewBox="0 0 6 10"><path d="M0.8 0.8L4.8 5L0.8 9.2" fill="none" stroke="#7b5ff2" stroke-width="1"/></svg></div>
<div class="t link" style="left:1515px;top:545.86px;">详情</div>
<div class="t link" style="left:1562px;top:545.86px;">日志</div>
<div class="band" style="top:586.29px"></div>
<svg style="position:absolute;left:282px;top:603.29px" width="10" height="6" viewBox="0 0 10 6"><path d="M0.5 0.5L5 5L9.5 0.5" fill="none" stroke="#555" stroke-width="1.1"/></svg>
<div class="cb" style="left:323px;top:598.29px"></div>
<div class="t bt" style="left:371px;top:606.29px;">#6</div>
<div class="t bt ono" style="left:475px;top:606.29px;">订单号:202406280769098171002000</div>
<svg style="position:absolute;left:688px;top:600.29px" width="11" height="11" viewBox="0 0 11 11"><rect x="3" y="0.5" width="7.5" height="7.5" rx="1" fill="none" stroke="#9a8cf0" stroke-width="1"/><path d="M1 3v6.5a1 1 0 0 0 1 1H8" fill="none" stroke="#9a8cf0" stroke-width="1"/></svg>
<div class="t bt otm" style="left:727px;top:606.29px;">下单时间:2024-11-02 18:28:07</div>
<div class="t bt" style="left:920px;top:606.29px;font-size:12.5px">钱包支付</div>
<div class="t bprice" style="left:1324px;top:606.29px;transform:translate(-50%,calc(-50% + 1px))"><span class="dash">¥299.00</span></div>
<div class="t bst" style="left:1418px;top:606.29px;color:#f04848">申请退款中</div>
<div class="thumb" style="left:275px;top:638.29px;background:#ab9f8a"><span>示例图</span></div>
<div class="t ptitle" style="left:345px;top:641.29px;letter-spacing:-0.13px"><span style="color:#7b5ff2">#17</span> 漫步者(EDIFIER) HECATE G2专业版 USB7.1声道 ...</div>
<div class="t psku" style="left:345px;top:659.29px;">白色</div>
<div class="t pprice" style="left:345px;top:687.29px;">¥299.00<span style="margin-left:8px">x1</span><span class="tag" style="margin-left:13px;vertical-align:1px">待发货</span></div>
<div class="t gray14" style="left:714px;top:666.79px;">未申请</div>
<div class="av" style="left:837px;top:639px;width:36px;height:36px">
<div class="avt" style="font-size:10.50px;top:6.00px">商城</div>
<div class="avb" style="top:23.30px;height:14.00px"></div>
<div class="avs" style="font-size:6.00px;top:24.80px">·&nbsp;&nbsp;B2C&nbsp;&nbsp;·</div></div>
<div class="t uname" style="left:855px;top:687.29px;transform:translate(-50%,calc(-50% + 1px))">用户1</div>
<div class="t addr1" style="left:913px;top:646.29px;">李白13434343344</div>
<div class="t addr2" style="left:913px;top:666.5899999999999px;">北京市/市辖区/丰台区</div>
<div class="t addr3" style="left:913px;top:687.99px;">111</div>
<div class="t c14" style="left:1130px;top:667.29px;">快递物流</div>
<div class="t c14" style="left:1324px;top:667.29px;transform:translate(-50%,calc(-50% + 1px))">¥299.00</div>
<div class="pill red" style="left:1418px;top:654.29px;width:107px">用户申请退款<svg style="position:absolute;left:88px;top:8px" width="6" height="10" viewBox="0 0 6 10"><path d="M0.8 0.8L4.8 5L0.8 9.2" fill="none" stroke="#f26b6b" stroke-width="1"/></svg></div>
<div class="t link" style="left:1541px;top:667.29px;">详情</div>
<div class="t link" style="left:1588px;top:667.29px;">日志</div>
<div class="band" style="top:707.72px"></div>
<svg style="position:absolute;left:282px;top:724.72px" width="10" height="6" viewBox="0 0 10 6"><path d="M0.5 0.5L5 5L9.5 0.5" fill="none" stroke="#555" stroke-width="1.1"/></svg>
<div class="cb" style="left:323px;top:719.72px"></div>
<div class="t bt" style="left:371px;top:727.72px;">#5</div>
<div class="t bt ono" style="left:475px;top:727.72px;">订单号:202404170931133141006000</div>
<svg style="position:absolute;left:688px;top:721.72px" width="11" height="11" viewBox="0 0 11 11"><rect x="3" y="0.5" width="7.5" height="7.5" rx="1" fill="none" stroke="#9a8cf0" stroke-width="1"/><path d="M1 3v6.5a1 1 0 0 0 1 1H8" fill="none" stroke="#9a8cf0" stroke-width="1"/></svg>
<div class="t bt otm" style="left:727px;top:727.72px;">下单时间:2024-10-18 16:17:09</div>
<div class="t bprice" style="left:1324px;top:727.72px;transform:translate(-50%,calc(-50% + 1px))"><span class="dash">¥15.00</span> 改价</div>
<div class="t bst" style="left:1418px;top:727.72px;color:#888">待付款</div>
<div class="thumb" style="left:275px;top:759.72px;background:#97a3bd"><span>示例图</span></div>
<div class="t ptitle" style="left:345px;top:762.72px;letter-spacing:0.05px"><span style="color:#7b5ff2">#31</span> 洁丽雅（Grace）3条抗菌新疆棉毛巾 纯棉柔软家...</div>
<div class="t pprice" style="left:345px;top:808.72px;">¥15.00<span style="margin-left:8px">x1</span><span class="tag" style="margin-left:13px;vertical-align:1px">待发货</span></div>
<div class="t gray14" style="left:714px;top:788.22px;">未申请</div>
<div class="av" style="left:837px;top:761px;width:36px;height:36px">
<div class="avt" style="font-size:10.50px;top:6.00px">商城</div>
<div class="avb" style="top:23.30px;height:14.00px"></div>
<div class="avs" style="font-size:6.00px;top:24.80px">·&nbsp;&nbsp;B2C&nbsp;&nbsp;·</div></div>
<div class="t uname" style="left:855px;top:808.72px;transform:translate(-50%,calc(-50% + 1px))">用户dQE2...</div>
<div class="t addr1" style="left:913px;top:767.72px;">崔13073313011</div>
<div class="t addr2" style="left:913px;top:788.02px;">江苏省/苏州市/虎丘区</div>
<div class="t addr3" style="left:913px;top:809.4200000000001px;">金桐湾</div>
<div class="t c14" style="left:1130px;top:788.72px;">快递物流</div>
<div class="t c14" style="left:1324px;top:788.72px;transform:translate(-50%,calc(-50% + 1px))">¥15.00</div>
<div class="t link" style="left:1421px;top:788.72px;">详情</div>
<div class="t link" style="left:1468px;top:788.72px;">日志</div>
<div class="band" style="top:829.15px"></div>
<svg style="position:absolute;left:282px;top:846.1500000000001px" width="10" height="6" viewBox="0 0 10 6"><path d="M0.5 0.5L5 5L9.5 0.5" fill="none" stroke="#555" stroke-width="1.1"/></svg>
<div class="cb" style="left:323px;top:841.1500000000001px"></div>
<div class="t bt" style="left:371px;top:849.1500000000001px;">#4</div>
<div class="t bt ono" style="left:475px;top:849.1500000000001px;">订单号:202403191151142410002000</div>
<svg style="position:absolute;left:688px;top:843.1500000000001px" width="11" height="11" viewBox="0 0 11 11"><rect x="3" y="0.5" width="7.5" height="7.5" rx="1" fill="none" stroke="#9a8cf0" stroke-width="1"/><path d="M1 3v6.5a1 1 0 0 0 1 1H8" fill="none" stroke="#9a8cf0" stroke-width="1"/></svg>
<div class="t bt otm" style="left:727px;top:849.1500000000001px;">下单时间:2024-10-15 15:35:12</div>
<div class="t bt" style="left:920px;top:849.1500000000001px;font-size:12.5px">钱包支付</div>
<div class="t bprice" style="left:1324px;top:849.1500000000001px;transform:translate(-50%,calc(-50% + 1px))"><span class="dash">¥7980.00</span></div>
<div class="t bst" style="left:1418px;top:849.1500000000001px;color:#f2a53c">待发货</div>
<div class="thumb" style="left:275px;top:881.15px;background:#d9c9a9"><span>示例图</span></div>
<div class="t ptitle" style="left:345px;top:884.1500000000001px;letter-spacing:0.3px"><span style="color:#7b5ff2">#19</span> Apple iPhone 13 Pro Max (A2644) 256GB 苍岭...</div>
<div class="t pprice" style="left:345px;top:930.1500000000001px;">¥7980.00<span style="margin-left:8px">x1</span><span class="tag" style="margin-left:13px;vertical-align:1px">待发货</span></div>
<div class="t gray14" style="left:714px;top:909.6500000000001px;">未申请</div>
<div class="av" style="left:837px;top:882px;width:36px;height:36px">
<div class="avt" style="font-size:10.50px;top:6.00px">商城</div>
<div class="avb" style="top:23.30px;height:14.00px"></div>
<div class="avs" style="font-size:6.00px;top:24.80px">·&nbsp;&nbsp;B2C&nbsp;&nbsp;·</div></div>
<div class="t uname" style="left:855px;top:930.15px;transform:translate(-50%,calc(-50% + 1px))">用户1</div>
<div class="t addr1" style="left:913px;top:889.1500000000001px;">李白13434343344</div>
<div class="t addr2" style="left:913px;top:909.45px;">北京市/市辖区/丰台区</div>
<div class="t addr3" style="left:913px;top:930.8500000000001px;">111</div>
<div class="t c14" style="left:1130px;top:910.1500000000001px;">快递物流</div>
<div class="t c14" style="left:1324px;top:910.15px;transform:translate(-50%,calc(-50% + 1px))">¥7980.00</div>
<div class="pill" style="left:1418px;top:897.15px;width:84px">立即发货<svg style="position:absolute;left:64px;top:8px" width="6" height="10" viewBox="0 0 6 10"><path d="M0.8 0.8L4.8 5L0.8 9.2" fill="none" stroke="#7b5ff2" stroke-width="1"/></svg></div>
<div class="t link" style="left:1515px;top:910.1500000000001px;">详情</div>
<div class="t link" style="left:1562px;top:910.1500000000001px;">日志</div>
<div class="band" style="top:950.58px"></div>
<svg style="position:absolute;left:282px;top:967.58px" width="10" height="6" viewBox="0 0 10 6"><path d="M0.5 0.5L5 5L9.5 0.5" fill="none" stroke="#555" stroke-width="1.1"/></svg>
<div class="cb" style="left:323px;top:962.58px"></div>
<div class="t bt" style="left:371px;top:970.58px;">#3</div>
<div class="t bt ono" style="left:475px;top:970.58px;">订单号:202409314083326227002000</div>
<svg style="position:absolute;left:688px;top:964.58px" width="11" height="11" viewBox="0 0 11 11"><rect x="3" y="0.5" width="7.5" height="7.5" rx="1" fill="none" stroke="#9a8cf0" stroke-width="1"/><path d="M1 3v6.5a1 1 0 0 0 1 1H8" fill="none" stroke="#9a8cf0" stroke-width="1"/></svg>
<div class="t bt otm" style="left:727px;top:970.58px;">下单时间:2024-08-19 09:31:40</div>
<div class="t bprice" style="left:1324px;top:970.58px;transform:translate(-50%,calc(-50% + 1px))"><span class="dash">¥2199.00</span> 改价</div>
<div class="t bst" style="left:1418px;top:970.58px;color:#888">待付款</div>
<div class="thumb" style="left:275px;top:1002.58px;background:#dccbc6"><span>示例图</span></div>
<div class="t ptitle" style="left:345px;top:1005.58px;letter-spacing:0.03px"><span style="color:#7b5ff2">#12</span> COACH蔻驰女包奢侈品官网奥莱山茶花Parker女士...</div>
<div class="t psku" style="left:345px;top:1023.58px;">红色</div>
<div class="t pprice" style="left:345px;top:1051.58px;">¥2199.00<span style="margin-left:8px">x1</span><span class="tag" style="margin-left:13px;vertical-align:1px">待发货</span></div>
<div class="t gray14" style="left:714px;top:1031.08px;">未申请</div>
<div class="av" style="left:837px;top:1004px;width:36px;height:36px">
<div class="avt" style="font-size:10.50px;top:6.00px">商城</div>
<div class="avb" style="top:23.30px;height:14.00px"></div>
<div class="avs" style="font-size:6.00px;top:24.80px">·&nbsp;&nbsp;B2C&nbsp;&nbsp;·</div></div>
<div class="t uname" style="left:855px;top:1051.58px;transform:translate(-50%,calc(-50% + 1px))">用户1</div>
<div class="t addr1" style="left:913px;top:1010.58px;">李白13434343344</div>
<div class="t addr2" style="left:913px;top:1030.88px;">北京市/市辖区/丰台区</div>
<div class="t addr3" style="left:913px;top:1052.28px;">111</div>
<div class="t c14" style="left:1130px;top:1031.58px;">快递物流</div>
<div class="t c14" style="left:1324px;top:1031.58px;transform:translate(-50%,calc(-50% + 1px))">¥2199.00</div>
<div class="t link" style="left:1421px;top:1031.58px;">详情</div>
<div class="t link" style="left:1468px;top:1031.58px;">日志</div>
<div class="band" style="top:1072.01px"></div>
<svg style="position:absolute;left:282px;top:1089.01px" width="10" height="6" viewBox="0 0 10 6"><path d="M0.5 0.5L5 5L9.5 0.5" fill="none" stroke="#555" stroke-width="1.1"/></svg>
<div class="cb" style="left:323px;top:1084.01px"></div>
<div class="t bt" style="left:371px;top:1092.01px;">#2</div>
<div class="t bt ono" style="left:475px;top:1092.01px;">订单号:202411122018138070002000</div>
<svg style="position:absolute;left:688px;top:1086.01px" width="11" height="11" viewBox="0 0 11 11"><rect x="3" y="0.5" width="7.5" height="7.5" rx="1" fill="none" stroke="#9a8cf0" stroke-width="1"/><path d="M1 3v6.5a1 1 0 0 0 1 1H8" fill="none" stroke="#9a8cf0" stroke-width="1"/></svg>
<div class="t bt otm" style="left:727px;top:1092.01px;">下单时间:2024-08-06 23:12:20</div>
<div class="t bprice" style="left:1324px;top:1092.01px;transform:translate(-50%,calc(-50% + 1px))"><span class="dash">¥89.00</span> 改价</div>
<div class="t bst" style="left:1418px;top:1092.01px;color:#888">待付款</div>
<div class="thumb" style="left:275px;top:1124.01px;background:#ccc6a8"><span>示例图</span></div>
<div class="t ptitle" style="left:345px;top:1127.01px;letter-spacing:0.16px"><span style="color:#7b5ff2">#16</span> 迪士尼儿童水杯带吸管 tritan夏季可爱双饮塑料壶...</div>
<div class="t psku" style="left:345px;top:1145.01px;">米妮粉</div>
<div class="t pprice" style="left:345px;top:1173.01px;">¥89.00<span style="margin-left:8px">x1</span><span class="tag" style="margin-left:13px;vertical-align:1px">待发货</span></div>
<div class="t gray14" style="left:714px;top:1152.51px;">未申请</div>
<div class="av" style="left:837px;top:1125px;width:36px;height:36px">
<div class="avt" style="font-size:10.50px;top:6.00px">商城</div>
<div class="avb" style="top:23.30px;height:14.00px"></div>
<div class="avs" style="font-size:6.00px;top:24.80px">·&nbsp;&nbsp;B2C&nbsp;&nbsp;·</div></div>
<div class="t uname" style="left:855px;top:1173.01px;transform:translate(-50%,calc(-50% + 1px))">用户1</div>
<div class="t addr1" style="left:913px;top:1132.01px;">李白13434343344</div>
<div class="t addr2" style="left:913px;top:1152.31px;">北京市/市辖区/丰台区</div>
<div class="t addr3" style="left:913px;top:1173.71px;">111</div>
<div class="t c14" style="left:1130px;top:1153.01px;">快递物流</div>
<div class="t c14" style="left:1324px;top:1153.01px;transform:translate(-50%,calc(-50% + 1px))">¥89.00</div>
<div class="t link" style="left:1421px;top:1153.01px;">详情</div>
<div class="t link" style="left:1468px;top:1153.01px;">日志</div>
<div class="band" style="top:1193.44px"></div>
<svg style="position:absolute;left:282px;top:1210.44px" width="10" height="6" viewBox="0 0 10 6"><path d="M0.5 0.5L5 5L9.5 0.5" fill="none" stroke="#555" stroke-width="1.1"/></svg>
<div class="cb" style="left:323px;top:1205.44px"></div>
<div class="t bt" style="left:371px;top:1213.44px;">#1</div>
<div class="t bt ono" style="left:475px;top:1213.44px;">订单号:202411185073949666002000</div>
<svg style="position:absolute;left:688px;top:1207.44px" width="11" height="11" viewBox="0 0 11 11"><rect x="3" y="0.5" width="7.5" height="7.5" rx="1" fill="none" stroke="#9a8cf0" stroke-width="1"/><path d="M1 3v6.5a1 1 0 0 0 1 1H8" fill="none" stroke="#9a8cf0" stroke-width="1"/></svg>
<div class="t bt otm" style="left:727px;top:1213.44px;">下单时间:2024-04-17 11:18:50</div>
<div class="t bprice" style="left:1324px;top:1213.44px;transform:translate(-50%,calc(-50% + 1px))"><span class="dash">¥7980.00</span></div>
<div class="t bst" style="left:1418px;top:1213.44px;color:#f04848">已取消</div>
<div class="thumb" style="left:275px;top:1245.44px;background:#d9c9a9"><span>示例图</span></div>
<div class="t ptitle" style="left:345px;top:1248.44px;letter-spacing:0.3px"><span style="color:#7b5ff2">#19</span> Apple iPhone 13 Pro Max (A2644) 256GB 苍岭...</div>
<div class="t pprice" style="left:345px;top:1294.44px;">¥7980.00<span style="margin-left:8px">x1</span><span class="tag" style="margin-left:13px;vertical-align:1px">待发货</span></div>
<div class="t gray14" style="left:714px;top:1273.94px;">未申请</div>
<div class="av" style="left:837px;top:1246px;width:36px;height:36px">
<div class="avt" style="font-size:10.50px;top:6.00px">商城</div>
<div class="avb" style="top:23.30px;height:14.00px"></div>
<div class="avs" style="font-size:6.00px;top:24.80px">·&nbsp;&nbsp;B2C&nbsp;&nbsp;·</div></div>
<div class="t uname" style="left:855px;top:1294.44px;transform:translate(-50%,calc(-50% + 1px))">用户1</div>
<div class="t addr1" style="left:913px;top:1253.44px;">李白13434343344</div>
<div class="t addr2" style="left:913px;top:1273.74px;">北京市/市辖区/丰台区</div>
<div class="t addr3" style="left:913px;top:1295.14px;">111</div>
<div class="t c14" style="left:1130px;top:1274.44px;">快递物流</div>
<div class="t c14" style="left:1324px;top:1274.44px;transform:translate(-50%,calc(-50% + 1px))">¥7980.00</div>
<div class="t link" style="left:1421px;top:1274.44px;">详情</div>
<div class="t link" style="left:1468px;top:1274.44px;">日志</div>
</div>
<div style="position:absolute;left:1632px;top:224px;width:6px;height:896px;border-radius:3px;background:rgba(150,150,150,0.5)"></div>
<div style="position:absolute;left:783px;top:809px;width:143px;height:60px;opacity:0.9">
<div style="position:absolute;left:0;top:0;width:143px;height:60px;background:#fff;border:1px solid #ebeef5;border-radius:4px;box-shadow:0 2px 12px rgba(0,0,0,0.1)"></div>
<div style="position:absolute;left:67px;top:55px;width:9px;height:9px;background:#fff;transform:rotate(45deg);border-right:1px solid #ebeef5;border-bottom:1px solid #ebeef5"></div>
<div class="av" style="left:12px;top:12px;width:36px;height:36px;"><div class="avt" style="font-size:10.50px;top:6.00px">商城</div><div class="avb" style="top:23.30px;height:14.00px"></div><div class="avs" style="font-size:6.00px;top:24.80px">·&nbsp;&nbsp;B2C&nbsp;&nbsp;·</div></div>
<div style="position:absolute;left:36px;top:36px;width:12px;height:12px;border-radius:3px;background:#f78e8e"></div>
<div class="t" style="left:56px;top:22px;font-size:14px;color:#555">用户1</div>
<div class="t" style="left:56px;top:41px;font-size:12.5px;color:#999"><span style="color:#7b5ff2">#2</span> FwSzHZLt</div>
</div>
<div class="foot"></div>
<div class="t" style="left:263px;top:1244px;font-size:14px;color:#333">已选择 0 项</div>
<div style="position:absolute;left:348px;top:1228px;width:88px;height:32px;border:1px solid #e4e7ed;border-radius:4px;background:#fff"></div>
<div class="t" style="left:364px;top:1244px;font-size:14px;color:#b5b5b5">批量发货</div>
<div class="t" style="left:1225px;top:1244px;font-size:14px;color:#333">共 9 条</div>
<div style="position:absolute;left:1286px;top:1228px;width:128px;height:32px;border:1px solid #dcdfe6;border-radius:4px;background:#fff"></div>
<div class="t" style="left:1314px;top:1244px;font-size:14px;color:#333">10条/页</div>
<svg class="ico" style="left:1389px;top:1241px" width="11" height="7" viewBox="0 0 11 7"><path d="M0.5 0.5L5.5 5.5L10.5 0.5" fill="none" stroke="#aaa" stroke-width="1"/></svg>
<svg class="ico" style="left:1442px;top:1239px" width="6" height="10" viewBox="0 0 6 10"><path d="M5.5 0.5L0.8 5L5.5 9.5" fill="none" stroke="#c0c4cc" stroke-width="1"/></svg>
<div class="t" style="left:1473px;top:1244px;font-size:15px;font-weight:bold;color:#7b5ff2">1</div>
<svg class="ico" style="left:1507px;top:1239px" width="6" height="10" viewBox="0 0 6 10"><path d="M0.5 0.5L5.2 5L0.5 9.5" fill="none" stroke="#888" stroke-width="1"/></svg>
<div class="t" style="left:1542px;top:1244px;font-size:14px;color:#333">前往</div>
<div style="position:absolute;left:1570px;top:1232px;width:60px;height:24px;border:1px solid #dcdfe6;border-radius:4px;background:#fff"></div>
<div class="t" style="left:1593px;top:1244px;font-size:13px;color:#333">1</div>
<div style="position:absolute;left:1615px;top:1177px;width:40px;height:40px;border-radius:50%;background:#fcfcfd;box-shadow:0 0 8px rgba(0,0,0,0.08)"></div>
<svg class="ico" style="left:1627.5px;top:1188px" width="15" height="17" viewBox="0 0 15 17"><path d="M7.5 1C4.5 1 3 3.3 3 6V9.5L1 12H14L12 9.5V6C12 3.3 10.5 1 7.5 1Z" fill="#7b61f5"/><rect x="6" y="13" width="3" height="2.2" rx="1" fill="#7b61f5"/></svg>
<div style="position:absolute;left:1615px;top:1227px;width:40px;height:40px;border-radius:50%;background:#fcfcfd;box-shadow:0 0 8px rgba(0,0,0,0.08)"></div>
<svg class="ico" style="left:1627px;top:1239px" width="16" height="16" viewBox="0 0 16 16"><circle cx="8" cy="7.8" r="7.5" fill="#7b61f5"/><path d="M1 15.5L2.5 11L5 14Z" fill="#7b61f5"/><circle cx="4.8" cy="8" r="1" fill="#fff"/><circle cx="8" cy="8" r="1" fill="#fff"/><circle cx="11.2" cy="8" r="1" fill="#fff"/></svg>
</body></html>
